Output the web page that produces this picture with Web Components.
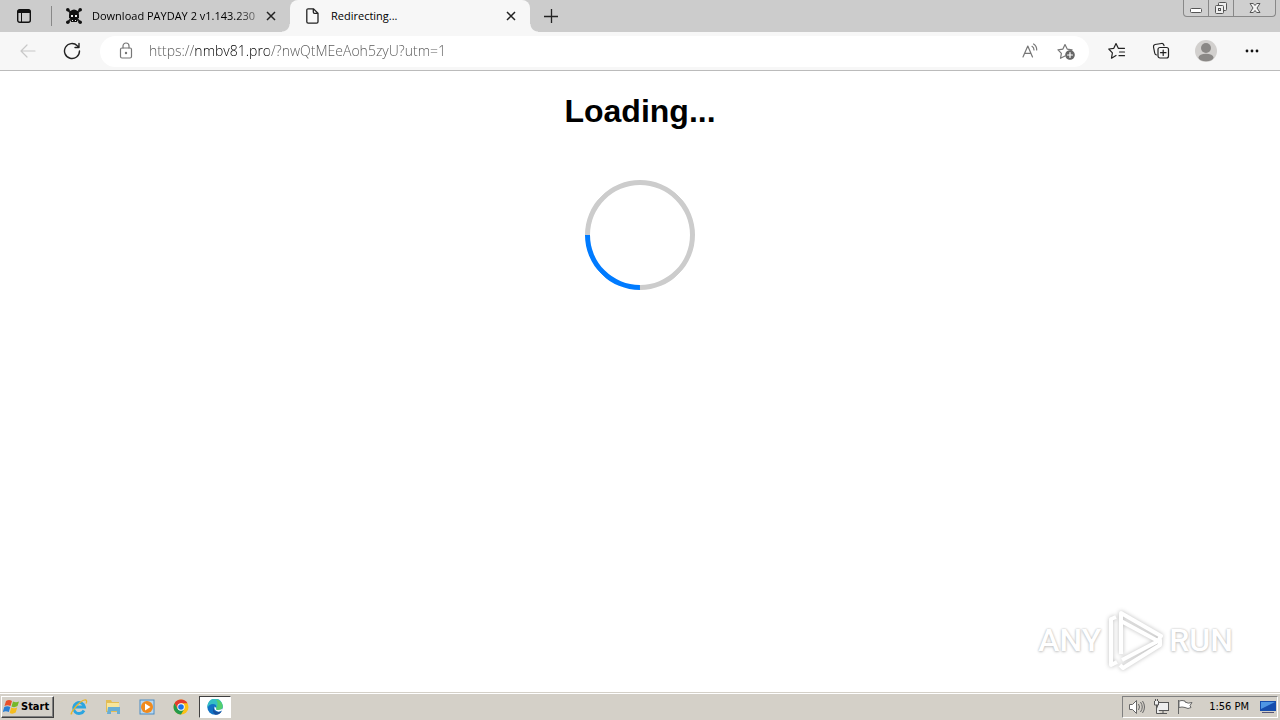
<!DOCTYPE html>
<html lang="en">
<head>
<meta charset="utf-8">
<title>Redirecting...</title>
<style>
html,body{height:100%;margin:0}
body{font-family:"Open Sans","Noto Sans",sans-serif;color:#000;background:#fff}
</style>
</head>
<body>
<desktop-screen></desktop-screen>

<template id="t-screen">
<style>
:host{display:flex;flex-direction:column;min-height:100vh}
loading-page{flex:1}
</style>
<tab-strip>
  <browser-tab label="Download PAYDAY 2 v1.143.230" faded>
    <svg slot="icon" width="16" height="16" viewBox="0 0 16 16"><path d="M2 2l12 12M14 2L2 14" stroke="#222" stroke-width="2"/><g fill="#111"><circle cx="1.8" cy="1.8" r="1.8"/><circle cx="14.2" cy="1.8" r="1.8"/><circle cx="1.8" cy="14.2" r="1.8"/><circle cx="14.2" cy="14.2" r="1.8"/><path d="M3 7a5 5.5 0 0 1 10 0v3l-2 1v3H5v-3l-2-1z"/></g><path d="M5 7h2v2H5zM9 7h2v2H9zM6 12h1v1H6zM9 12h1v1H9z" fill="#eee"/></svg>
  </browser-tab>
  <browser-tab label="Redirecting..." active>
    <svg slot="icon" width="16" height="16" viewBox="0 0 16 16" fill="none" stroke="#222" stroke-width="1.3"><path d="M3.2.8h5.300l4.500 4.500v8.500q0 1.400-1.400 1.400H3.200q-1.400 0-1.400-1.400V2.200Q1.800.8 3.200.8zM8.300 1v3q0 1.300 1.300 1.300H13"/></svg>
  </browser-tab>
</tab-strip>
<address-bar></address-bar>
<loading-page></loading-page>
<task-bar></task-bar>
</template>

<template id="t-strip">
<style>
:host{display:flex;height:32px;background:#ccc;align-items:stretch;overflow:hidden}
button{border:0;background:none;padding:0;display:grid;place-items:center}
.menu{width:48px}
.rule{width:1px;height:20px;margin:6px 2px 0 3px;background:#888}
.add{width:40px;margin-left:1px}
.win{margin-left:auto;margin-right:4px;height:17px;display:flex;box-sizing:border-box;border:1px solid #888;border-top:0;border-radius:0 0 4px 4px;background:#cfcfcf}
.win button{width:25px;border-right:1px solid #888}
.win button:last-child{width:41px;border:0}
</style>
<button class="menu" aria-label="Tab actions"><svg width="16" height="16" viewBox="0 0 16 16"><rect x="1.700" y="1.700" width="12.600" height="12.600" rx="2" fill="none" stroke="#111" stroke-width="1.400"/><path d="M1.500 5V3.500q0-2 2-2h9q2 0 2 2V5z" fill="#111"/><path d="M5.500 5v9" stroke="#111"/></svg></button>
<span class="rule"></span>
<slot></slot>
<button class="add" aria-label="New tab"><svg width="16" height="16" viewBox="0 0 16 16"><path d="M8.500 1v14M1 8.500h14" stroke="#222" stroke-width="1.300"/></svg></button>
<div class="win">
<button aria-label="Minimize"><svg width="16" height="16" viewBox="0 0 16 16"><rect x="2.500" y="8.500" width="11" height="4" rx="1" fill="#fff" stroke="#555"/></svg></button>
<button aria-label="Restore"><svg width="16" height="16" viewBox="0 0 16 16"><g fill="#eee" stroke="#555"><rect x="5.500" y="2.500" width="8" height="8" rx="1"/><rect x="2.500" y="5.500" width="8" height="8" rx="1"/><rect x="5.500" y="8.500" width="2" height="2"/></g></svg></button>
<button aria-label="Close"><svg width="16" height="16" viewBox="0 0 16 16"><path d="M3 3.500h3.300L8 5.500l1.700-2H13L10 8l3 4.500H9.700L8 10.500l-1.700 2H3L6 8z" fill="#f4f4f4" stroke="#555"/></svg></button>
</div>
</template>

<template id="t-tab">
<style>
:host{display:flex;align-items:center;box-sizing:border-box;width:236px;padding:0 9px 0 12px;position:relative}
:host([active]){width:240px;padding:0 9px 0 15px;background:#f7f7f7;border-radius:8px 8px 0 0}
:host([active])::before,:host([active])::after{content:"";position:absolute;bottom:0;width:8px;height:8px}
:host([active])::before{right:100%;background:radial-gradient(circle at 0 0,transparent 7px,#f7f7f7 8px)}
:host([active])::after{left:100%;background:radial-gradient(circle at 100% 0,transparent 7px,#f7f7f7 8px)}
.tab{flex:1;min-width:0;display:flex;align-items:center;gap:10px;border:0;padding:0;background:none;color:#000;font:11px/16px "Open Sans",sans-serif;text-align:left}
.t{flex:1;overflow:hidden;white-space:nowrap}
:host([faded]) .t{-webkit-mask-image:linear-gradient(90deg,#000 85%,#0004)}
.x{border:0;padding:0;background:none;width:20px;height:20px;display:grid;place-items:center;flex:none}
::slotted(svg){flex:none}
</style>
<button class="tab" role="tab"><slot name="icon"></slot><span class="t"></span></button>
<button class="x" aria-label="Close tab"><svg width="10" height="10" viewBox="0 0 10 10"><path d="M1 1l8 8M9 1L1 9" stroke="#222" stroke-width="1.500"/></svg></button>
</template>

<template id="t-address">
<style>
:host{display:flex;align-items:center;box-sizing:border-box;height:39px;padding:0 5px 0 6px;background:#f7f7f7;border-bottom:1px solid #bbb}
button{border:0;padding:0;background:none;width:44px;height:30px;display:grid;place-items:center;flex:none}
.field{flex:1;min-width:0;display:flex;align-items:center;height:31px;box-sizing:border-box;margin:0 6px;padding:0 5px 0 8px;border-radius:16px;background:#fff}
.field button{width:36px}
input{flex:1;min-width:0;border:0;padding:0;margin-left:5px;outline:0;height:22px;font:300 14px/22px "Open Sans",sans-serif;color:#555;background:linear-gradient(90deg,#555 46px,#000 46px,#000 120px,#555 120px);-webkit-background-clip:text;background-clip:text;-webkit-text-fill-color:transparent}
svg{fill:none;stroke:#222;stroke-width:1.200;stroke-linejoin:round;stroke-linecap:round}
.g svg{stroke:#777}
.dim svg{stroke:#c8c8c8}
.more{width:46px}
</style>
<button class="dim" aria-label="Back"><svg width="18" height="16" viewBox="0 0 18 16"><path d="M16 8H2M8 2L2 8l6 6"/></svg></button>
<button aria-label="Refresh"><svg width="18" height="18" viewBox="0 0 18 18"><path d="M16.500 9a7.500 7.500 0 1 1-2.200-5.300L16 5.300M16 1.500v4h-4" stroke-width="1.400"/></svg></button>
<div class="field">
<button class="g" aria-label="View site information"><svg width="16" height="18" viewBox="0 0 16 18"><rect x="2.500" y="6" width="11" height="10" rx="1.500"/><path d="M5 6V4a3 3 0 0 1 6 0v2"/><circle cx="8" cy="11" r=".6" fill="#777"/></svg></button>
<input aria-label="Address" spellcheck="false" value="https://nmbv81.pro/?nwQtMEeAoh5zyU?utm=1">
<button class="g" aria-label="Read aloud"><svg width="18" height="18" viewBox="0 0 18 18"><path d="M2 15L6.800 4l4.700 11M3.600 11.300h6.300M11 4.300q2 1.200 2 3.700M12.600 2q3.200 2 3.100 6"/></svg></button>
<button class="g" aria-label="Add to favorites"><svg width="20" height="20" viewBox="0 0 20 20"><path d="M9 15l-4.500 2.300.9-5L2 8.800l4.900-.7L9 3.500l2.200 4.600 4.900.7-1.600 1.500"/><circle cx="14" cy="14" r="4.200" fill="#666" stroke="#666"/><path d="M14 11.500v5M11.500 14h5" stroke="#fff"/></svg></button>
</div>
<button aria-label="Favorites"><svg width="18" height="18" viewBox="0 0 18 18"><path d="M8 13.500l-4.500 2.700.9-5.400L.8 7l5-.7L8 1.500l2.300 4.800H16.500M11.500 10h5M11 13.700h5.500"/></svg></button>
<button aria-label="Collections"><svg width="18" height="18" viewBox="0 0 18 18"><path d="M4.500 13Q3 12.700 2.700 11L1.500 5Q1.200 3 3 2.500L9.500 1.500q1.700-.2 2.200 1.200l.3 1"/><rect x="6" y="5.500" width="10.500" height="10.500" rx="2"/><path d="M11.200 8v5.500M8.500 10.700H14"/></svg></button>
<button class="more" aria-label="Profile"><svg width="22" height="22" viewBox="0 0 22 22"><g stroke="none"><circle cx="11" cy="11" r="11" fill="#d2d0ce"/><circle cx="11" cy="8" r="5" fill="#8a8886"/><ellipse cx="11" cy="17.500" rx="7.500" ry="3.800" fill="#8a8886"/></g></svg></button>
<button class="more" aria-label="Settings and more"><svg width="16" height="4" viewBox="0 0 16 4"><g fill="#111" stroke="none"><circle cx="3" cy="2" r="1.400"/><circle cx="8" cy="2" r="1.400"/><circle cx="13" cy="2" r="1.400"/></g></svg></button>
</template>

<template id="t-page">
<style>
:host{display:flex;flex-direction:column;align-items:center;position:relative;background:#fff}
h1{margin:21px 0 50px;font:bold 32px/38px "Liberation Sans",Arial,sans-serif}
.spin{box-sizing:border-box;width:110px;height:110px;border:5px solid #ccc;border-radius:50%;border-bottom-color:#007bff;transform:rotate(45deg)}
.mark{position:absolute;right:47px;bottom:20px;display:flex;align-items:center;gap:4px;font:500 32px/64px "Roboto",sans-serif;color:#fff;text-shadow:0 0 2px #bbb,0 1px 3px #ccc}
.mark svg{filter:drop-shadow(0 0 2px #bbb)}
</style>
<h1>Loading...</h1>
<div class="spin" role="status" aria-label="Loading"></div>
<div class="mark"><span>ANY</span><svg width="60" height="64" viewBox="0 0 60 64" fill="none" stroke="#fff" stroke-width="4" stroke-linejoin="round"><path d="M11 9L6 11v46l6-3M16 46V5l40 23-3 5-37-20M17 52l38-20v5L18 60l-3-3"/></svg><span>RUN</span></div>
</template>

<template id="t-task">
<style>
:host{display:flex;align-items:center;box-sizing:border-box;height:28px;padding:2px 2px 1px 1px;background:#d4d0c8;border-top:1px solid #d4d0c8;box-shadow:inset 0 1px #fff;font:11px/16px "DejaVu Sans Condensed",sans-serif}
button{border:0;padding:0;background:none;display:grid;place-items:center}
.start{box-sizing:border-box;width:53px;height:22px;display:flex;align-items:center;gap:1px;padding-left:1px;border:1px solid;border-color:#fff #404040 #404040 #fff;box-shadow:inset -1px -1px #808080;font:bold 11px/16px "DejaVu Sans Condensed",sans-serif}
nav{display:flex;margin-left:8px}
nav button{width:34px;height:22px}
nav .on{width:32px;box-sizing:border-box;margin-left:1px;background:#fff;border:1px solid;border-color:#404040 #fff #fff #404040}
.tray{margin-left:auto;display:flex;align-items:center;gap:8px;box-sizing:border-box;height:22px;padding:0 1px 0 5px;border:1px solid;border-color:#808080 #fff #fff #808080}
time{margin:0 3px 0 8px}
</style>
<button class="start"><svg width="17" height="16" viewBox="0 0 17 16"><path d="M3 2q3-2 6 0L7.500 7q-3-1.500-6 0z" fill="#e9502a"/><path d="M10 2.500q3 1.500 6 0L14.500 7q-3 2-6 .5z" fill="#76b82a"/><path d="M1.300 8q3-1.500 6 0L5.800 13q-3-1.500-6 0z" fill="#2a7fd4"/><path d="M8.200 8.500q3 1.500 6 0l-1.500 5q-3 2-6 .5z" fill="#f5bd1f"/></svg>Start</button>
<nav aria-label="Pinned programs">
<button aria-label="Internet Explorer"><svg width="18" height="18" viewBox="0 0 18 18" fill="none"><path d="M14 12.500A5.500 5.500 0 1 1 14.500 9H5" stroke="#2ba5e0" stroke-width="2.800"/><path d="M2 15C-1 19 4 9 10 4.500c5-4 8-3 6 1" stroke="#e8b52d" stroke-width="1.300"/></svg></button>
<button aria-label="Explorer"><svg width="18" height="18" viewBox="0 0 18 18"><path d="M2 2h5l1 2h7v10H2z" fill="#e3bd55"/><path d="M3 5h12v8H3z" fill="#f7e59b"/><path d="M3 16l1-7h12v7h-3v-3H7v3z" fill="#69aed5"/></svg></button>
<button aria-label="Media Player"><svg width="18" height="18" viewBox="0 0 18 18"><rect x="2" y="2" width="14" height="14" fill="#b9d7ef" stroke="#4a8cc4"/><circle cx="9" cy="9" r="6" fill="#f08a1d"/><path d="M7 5.500L12.500 9 7 12.500z" fill="#fff"/></svg></button>
<button aria-label="Chrome"><svg width="16" height="16" viewBox="0 0 16 16"><circle cx="8" cy="8" r="7.500" fill="#fbc116"/><path d="M1.500 4.300A7.500 7.500 0 0 1 14.500 4.300H8L4.700 10z" fill="#e33b2e"/><path d="M1.500 4.300A7.500 7.500 0 0 0 8 15.500L11.200 10H4.700z" fill="#229a4c"/><circle cx="8" cy="8" r="3.700" fill="#fff"/><circle cx="8" cy="8" r="2.800" fill="#1a73e8"/></svg></button>
<button class="on" aria-label="Edge"><svg width="16" height="16" viewBox="0 0 16 16"><circle cx="8" cy="8" r="7.700" fill="#1172c5"/><path d="M.5 7A7.600 7.600 0 0 1 15.700 7q0 4-4.500 4-3 0-2-2Q10 5 6 5T.5 9z" fill="#34bfc4"/><path d="M9 .5Q15 1.500 15.700 7q0 4-4.500 4-3 0-2-2Q12 5 9 .5z" fill="#54cf6e"/><path d="M7.200 7q-2 5 3 6 3 .5 4.700-1.300Q13 16 8.500 15.700 4 13 7.200 7z" fill="#174f9c"/><path d="M7.500 7.500q-.8 4.500 4 5.200 3-.2 4.500-2.200l-1-.5q-2 1-3.800 1-3 0-2-2z" fill="#fff"/></svg></button>
</nav>
<div class="tray">
<svg width="17" height="16" viewBox="0 0 17 16" fill="#fff" stroke="#666"><path d="M1.500 5.500h3l4-4v13l-4-4h-3z"/><path d="M10.500 5q2 3 0 6M12.500 3q3.500 5 0 10M14.500 2q4 6 0 12" fill="none"/></svg>
<svg width="16" height="16" viewBox="0 0 16 16" fill="#eee" stroke="#555"><rect x="4.500" y="3.500" width="11" height="8"/><path d="M6 14.500h8M10 12v2M1.500 2v4h4V2M3.500 6v8.500H7M2.500 0v2M4.500 0v2"/></svg>
<svg width="16" height="16" viewBox="0 0 16 16" fill="#fff" stroke="#666"><path d="M1.500 15V1M2 2q3-1 6 0v1q3 2 7 .5l-2 3 1 2q-3 2-6 0Q5 7.500 2 8.500z"/></svg>
<time datetime="13:56">1:56 PM</time>
<svg width="16" height="16" viewBox="0 0 16 16"><rect y="2" width="16" height="10" fill="#164dad"/><path d="M1 3h14L1 10z" fill="#4f96e4"/><path d="M2 13h12v1H2z" fill="#557"/></svg>
</div>
</template>

<script>
function define(name, templateId, setup) {
  customElements.define(name, class extends HTMLElement {
    constructor() {
      super();
      this.attachShadow({mode: "open"}).append(document.getElementById(templateId).content.cloneNode(true));
    }
    connectedCallback() { if (setup) setup(this); }
  });
}
define("browser-tab", "t-tab", el => {
  el.shadowRoot.querySelector(".t").textContent = el.getAttribute("label");
  el.shadowRoot.querySelector(".tab").setAttribute("aria-selected", el.hasAttribute("active"));
});
define("tab-strip", "t-strip");
define("address-bar", "t-address");
define("loading-page", "t-page");
define("task-bar", "t-task");
define("desktop-screen", "t-screen");
</script>
</body>
</html>
